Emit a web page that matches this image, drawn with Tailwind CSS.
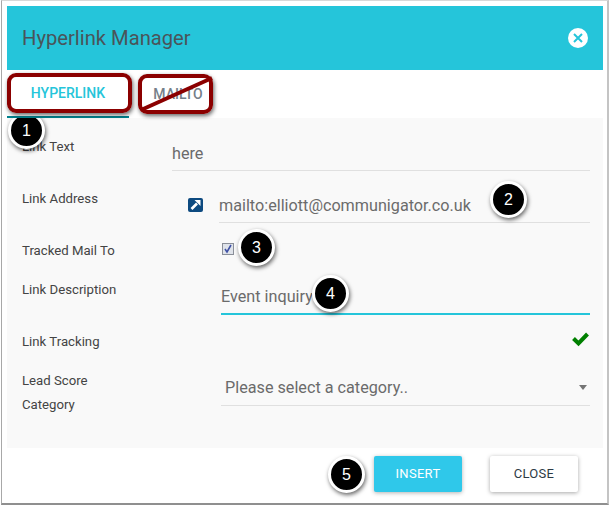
<!DOCTYPE html>
<html lang="en">
<head>
    <meta charset="UTF-8">
    <meta name="viewport" content="width=device-width, initial-scale=1.0">
    <title>Hyperlink Manager</title>
    <script src="https://cdn.jsdelivr.net/npm/@tailwindcss/browser@4"></script>
</head>
<body class="bg-white font-['Roboto',sans-serif]">
<div class="relative w-[610px] h-[507px] overflow-hidden bg-white">

    <!-- Dialog -->
    <div class="ml-[1px] w-[608px] h-[505px] bg-white border border-[#d8d8d8] border-l-[#a8a8a8] border-r-2 border-r-[#c4c4c4] border-b-2 border-b-[#8f8f8f] pt-[5px] pl-[5px]">

        <!-- Header -->
        <div class="w-[596px] h-[64px] bg-[#25c5da] flex items-center justify-between pl-[15px] pr-[15px]">
            <span class="text-[20.2px] text-[#4a5459]">Hyperlink Manager</span>
            <svg class="w-[20px] h-[20px] mb-[1px]" viewBox="0 0 20 20">
                <circle cx="10" cy="10" r="10" fill="#fff"/>
                <path d="M6 6l8 8M14 6l-8 8" stroke="#25c5da" stroke-width="2" fill="none"/>
            </svg>
        </div>

        <!-- Tabs -->
        <div class="relative z-10 w-[596px] h-[48px] bg-white flex text-[14px] font-medium">
            <div class="w-[122px] h-[48px] border-b-2 border-[#00838f] text-[#25c5da] flex items-center justify-center pt-[1px]">HYPERLINK</div>
            <div class="w-[98px] h-[48px] text-[#757f8a] flex items-center justify-center pt-[1px]">MAILTO</div>
        </div>

        <!-- Form -->
        <div class="w-[596px] h-[330px] bg-[#f9f9f9] text-[13.2px] text-[#444]">
            <div class="h-[53px] flex pl-[15px] pr-[13px]">
                <span class="w-[150px] pt-[19px]">Link Text</span>
                <div class="flex-1 h-[53px] border-b border-[#e0e0e0] pt-[25px] text-[16.2px] leading-[22px] text-[#6b6b6b]">here</div>
            </div>
            <div class="h-[52px] flex pl-[15px] pr-[13px]">
                <span class="w-[166px] pt-[18px]">Link Address</span>
                <div class="w-[15px] pt-[27px]">
                    <svg class="w-[15px] h-[14px]" viewBox="0 0 15 14">
                        <rect width="15" height="14" rx="2" fill="#0d4a80"/>
                        <path d="M3.5 11L9 5.5" stroke="#fff" stroke-width="2.6" fill="none"/>
                        <path d="M6.5 2H12.5V8z" fill="#fff"/>
                    </svg>
                </div>
                <div class="ml-[16px] flex-1 h-[52px] border-b border-[#e0e0e0] pt-[24px] text-[16.2px] leading-[22px] text-[#6b6b6b]">mailto:elliott@communigator.co.uk</div>
            </div>
            <div class="h-[39px] flex pl-[15px] pr-[13px]">
                <span class="w-[200px] pt-[18px]">Tracked Mail To</span>
                <div class="w-[12px] h-[12px] mt-[20px] border border-[#8a8f99] bg-[#dfe3ea] flex items-center justify-center">
                    <svg class="w-[10px] h-[10px]" viewBox="0 0 10 10"><path d="M2 5l2 3 4-7" stroke="#3f51a5" stroke-width="1.6" fill="none"/></svg>
                </div>
            </div>
            <div class="h-[53px] flex pl-[15px] pr-[13px]">
                <span class="w-[199px] pt-[18px]">Link Description</span>
                <div class="flex-1 h-[53px] border-b-2 border-[#25c5da] pt-[24px] text-[16.2px] leading-[22px] text-[#6b6b6b]">Event inquiry</div>
            </div>
            <div class="h-[46px] flex justify-between pl-[15px] pr-[14px]">
                <span class="pt-[17px]">Link Tracking</span>
                <svg class="w-[18px] h-[15px] mt-[17px]" viewBox="0 0 18 15"><path d="M2.5 6.5l5 5L16.5 2" stroke="#008000" stroke-width="4" fill="none"/></svg>
            </div>
            <div class="h-[45px] flex pl-[15px] pr-[13px]">
                <span class="w-[199px] leading-[24px] pt-[8px]">Lead Score<br>Category</span>
                <div class="flex-1 h-[45px] border-b border-[#e0e0e0] pl-[4px] pr-[3px] pt-[16px] flex justify-between text-[16.2px] leading-[22px] text-[#6b6b6b]">
                    <span>Please select a category..</span>
                    <span class="w-0 h-0 mt-[8px] border-x-[4px] border-x-transparent border-t-[5px] border-t-[#757575]"></span>
                </div>
            </div>
        </div>

        <!-- Footer -->
        <div class="flex pl-[367px] pt-[8px] gap-[28px] text-[13px] tracking-[0.3px]">
            <button class="w-[88px] h-[36px] rounded-[2px] bg-[#2fc8ea] text-white shadow-[0_1px_4px_rgba(0,0,0,0.3)]">INSERT</button>
            <button class="w-[88px] h-[36px] rounded-[2px] bg-white text-[#2d3a45] shadow-[0_1px_4px_rgba(0,0,0,0.35)]">CLOSE</button>
        </div>
    </div>

    <!-- Annotation boxes -->
    <div class="absolute z-20 left-[7px] top-[73px] w-[125px] h-[40px] border-4 border-[#8b0000] rounded-[9px] shadow-[1px_2px_4px_rgba(0,0,0,0.6)]"></div>
    <div class="absolute z-20 left-[138px] top-[74px] w-[75px] h-[40px] border-4 border-[#8b0000] rounded-[9px] shadow-[1px_2px_4px_rgba(0,0,0,0.6)]"></div>
    <svg class="absolute z-20 left-[138px] top-[74px] w-[75px] h-[40px]" viewBox="0 0 75 40"><path d="M3 36L74 4" stroke="#8b0000" stroke-width="4"/></svg>

    <!-- Numbered markers -->
    <div class="absolute left-[8px] top-[112px] w-[37px] h-[37px] rounded-full bg-black border-[3px] border-white shadow-[1px_2px_4px_rgba(0,0,0,0.6)] text-white text-[16px] flex items-center justify-center font-['Liberation_Sans',sans-serif]">1</div>
    <div class="absolute left-[490px] top-[181px] w-[37px] h-[37px] rounded-full bg-black border-[3px] border-white shadow-[1px_2px_4px_rgba(0,0,0,0.6)] text-white text-[16px] flex items-center justify-center font-['Liberation_Sans',sans-serif]">2</div>
    <div class="absolute left-[238px] top-[229px] w-[37px] h-[37px] rounded-full bg-black border-[3px] border-white shadow-[1px_2px_4px_rgba(0,0,0,0.6)] text-white text-[16px] flex items-center justify-center font-['Liberation_Sans',sans-serif]">3</div>
    <div class="absolute left-[312px] top-[275px] w-[37px] h-[37px] rounded-full bg-black border-[3px] border-white shadow-[1px_2px_4px_rgba(0,0,0,0.6)] text-white text-[16px] flex items-center justify-center font-['Liberation_Sans',sans-serif]">4</div>
    <div class="absolute left-[328px] top-[456px] w-[37px] h-[37px] rounded-full bg-black border-[3px] border-white shadow-[1px_2px_4px_rgba(0,0,0,0.6)] text-white text-[16px] flex items-center justify-center font-['Liberation_Sans',sans-serif]">5</div>
</div>
</body>
</html>
